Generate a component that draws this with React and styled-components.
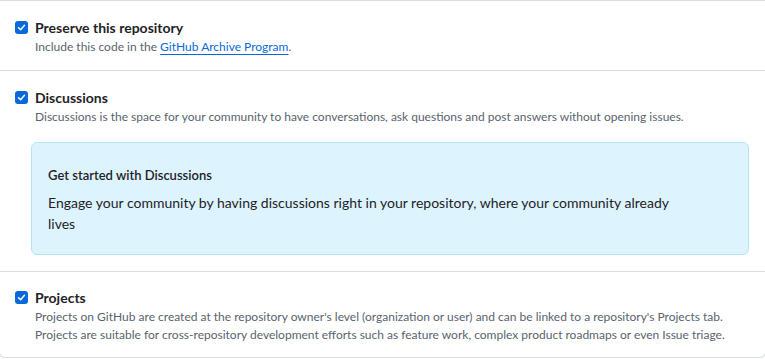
import React from 'react';
import styled, { createGlobalStyle } from 'styled-components';

const GlobalStyle = createGlobalStyle`
  body {
    margin: 0;
    background: #ffffff;
    font-family: Lato, "Liberation Sans", sans-serif;
    color: #1f2328;
  }
`;

const Panel = styled.div`
  margin: 0 -1px;
  border: 1px solid #d8dee4;
  border-top: none;
  border-radius: 0 0 6px 6px;
`;

const Row = styled.div`
  display: flex;
  gap: 7px;
  padding: ${(p) => p.$pad || '16px 16px 16px 15px'};
  border-top: 1px solid #d8dee4;
`;

const Box = styled.span`
  flex: none;
  width: 13px;
  height: 13px;
  margin-top: 4px;
  border-radius: 3px;
  background: #0969da;
  display: flex;
  align-items: center;
  justify-content: center;
`;

const Body = styled.div`
  display: flex;
  flex-direction: column;
  flex: 1;
`;

const Title = styled.div`
  font-size: 14px;
  font-weight: 700;
  line-height: 21px;
`;

const Note = styled.div`
  font-size: 12px;
  line-height: 18px;
  color: #59636e;
`;

const Link = styled.a`
  color: #0969da;
  text-decoration: underline;
  text-underline-offset: 3px;
`;

const Callout = styled.div`
  margin: 16px 0 0 -4px;
  padding: 22px 16px 20px;
  background: #ddf4ff;
  border: 1px solid #b6e3ff;
  border-radius: 6px;
`;

const CalloutTitle = styled.div`
  font-size: 13px;
  font-weight: 600;
  line-height: 21px;
  margin-bottom: 6px;
`;

const CalloutText = styled.p`
  margin: 0;
  font-size: 14px;
  line-height: 21px;
  max-width: 650px;
`;

const Check = () => (
  <Box>
    <svg width="9" height="9" viewBox="0 0 12 12">
      <path d="M2 6.4 L4.8 9 L10 3" fill="none" stroke="#fff" strokeWidth="2" strokeLinecap="round" strokeLinejoin="round" />
    </svg>
  </Box>
);

export default function App() {
  return (
    <>
      <GlobalStyle />
      <Panel>
        <Row $pad="16px 16px 14px 15px">
          <Check />
          <Body>
            <Title>Preserve this repository</Title>
            <Note>
              Include this code in the <Link href="#">GitHub Archive Program</Link>.
            </Note>
          </Body>
        </Row>
        <Row>
          <Check />
          <Body>
            <Title>Discussions</Title>
            <Note>
              Discussions is the space for your community to have conversations, ask questions and post answers without opening issues.
            </Note>
            <Callout>
              <CalloutTitle>Get started with Discussions</CalloutTitle>
              <CalloutText>
                Engage your community by having discussions right in your repository, where your community already lives
              </CalloutText>
            </Callout>
          </Body>
        </Row>
        <Row $pad="15px 16px 13px 15px">
          <Check />
          <Body>
            <Title>Projects</Title>
            <Note>
              Projects on GitHub are created at the repository owner's level (organization or user) and can be linked to a repository's Projects tab.
              <br />
              Projects are suitable for cross-repository development efforts such as feature work, complex product roadmaps or even Issue triage.
            </Note>
          </Body>
        </Row>
      </Panel>
    </>
  );
}
